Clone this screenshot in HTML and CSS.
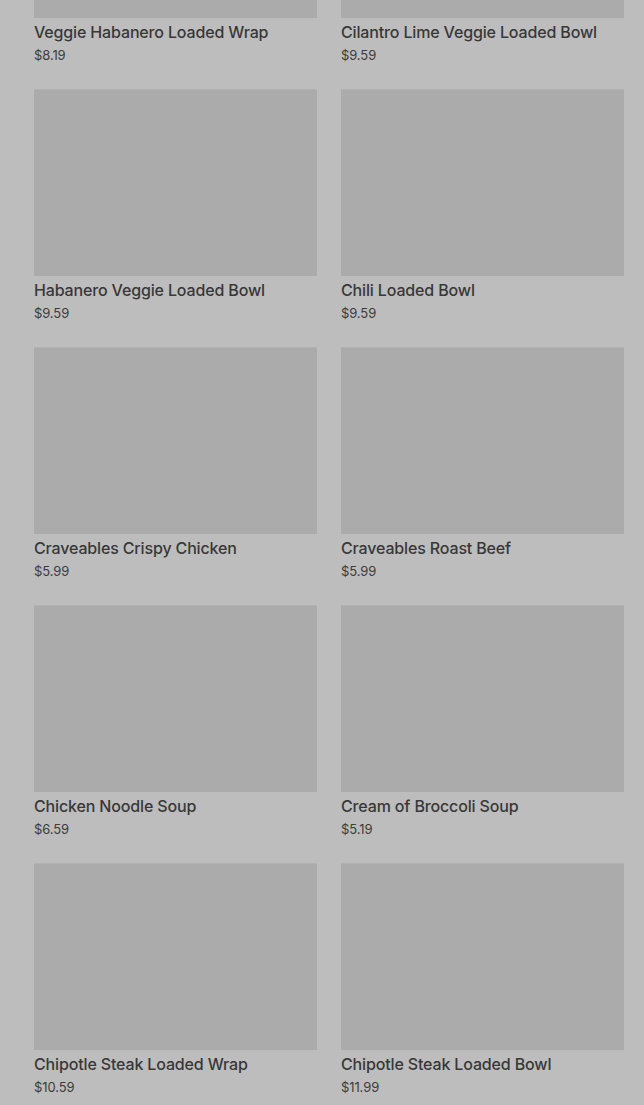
FILE: index.html
```html
<!DOCTYPE html>
<html lang="en">
<head>
  <meta charset="UTF-8">
  <title>Menu</title>
  <meta name="viewport" content="width=device-width, initial-scale=1.0">
  <link rel="stylesheet" href="styles.css">
</head>
<body>
  <div class="menu">
    <div class="grid">
      <div class="item">
        <div class="photo"></div>
        <div class="name">Veggie Habanero Loaded Wrap</div>
        <div class="price">$8.19</div>
      </div>
      <div class="item">
        <div class="photo"></div>
        <div class="name">Cilantro Lime Veggie Loaded Bowl</div>
        <div class="price">$9.59</div>
      </div>
      <div class="item">
        <div class="photo"></div>
        <div class="name">Habanero Veggie Loaded Bowl</div>
        <div class="price">$9.59</div>
      </div>
      <div class="item">
        <div class="photo"></div>
        <div class="name">Chili Loaded Bowl</div>
        <div class="price">$9.59</div>
      </div>
      <div class="item">
        <div class="photo"></div>
        <div class="name">Craveables Crispy Chicken</div>
        <div class="price">$5.99</div>
      </div>
      <div class="item">
        <div class="photo"></div>
        <div class="name">Craveables Roast Beef</div>
        <div class="price">$5.99</div>
      </div>
      <div class="item">
        <div class="photo"></div>
        <div class="name">Chicken Noodle Soup</div>
        <div class="price">$6.59</div>
      </div>
      <div class="item">
        <div class="photo"></div>
        <div class="name">Cream of Broccoli Soup</div>
        <div class="price">$5.19</div>
      </div>
      <div class="item">
        <div class="photo"></div>
        <div class="name">Chipotle Steak Loaded Wrap</div>
        <div class="price">$10.59</div>
      </div>
      <div class="item">
        <div class="photo"></div>
        <div class="name">Chipotle Steak Loaded Bowl</div>
        <div class="price">$11.99</div>
      </div>
    </div>
  </div>
</body>
</html>
```

FILE: styles.css
```css
html, body {
  margin: 0;
  padding: 0;
  background: #bdbdbd;
  font-family: Inter, "Noto Sans", sans-serif;
  overflow: hidden;
}

.menu {
  padding: 0 20px 0 34px;
}

.grid {
  display: grid;
  grid-template-columns: 283px 283px;
  column-gap: 24px;
  row-gap: 25px;
  margin-top: -169px;
}

.photo {
  height: 187px;
  background: #ababab;
  border-top: 1px solid #b2b2b2;
  box-sizing: border-box;
}

.name {
  margin-top: 4px;
  font-size: 16px;
  line-height: 20px;
  font-weight: 500;
  letter-spacing: -0.15px;
  color: #383838;
}

.price {
  margin-top: 4px;
  font-size: 13px;
  line-height: 18px;
  letter-spacing: -0.1px;
  color: #3c3c3c;
}
```
